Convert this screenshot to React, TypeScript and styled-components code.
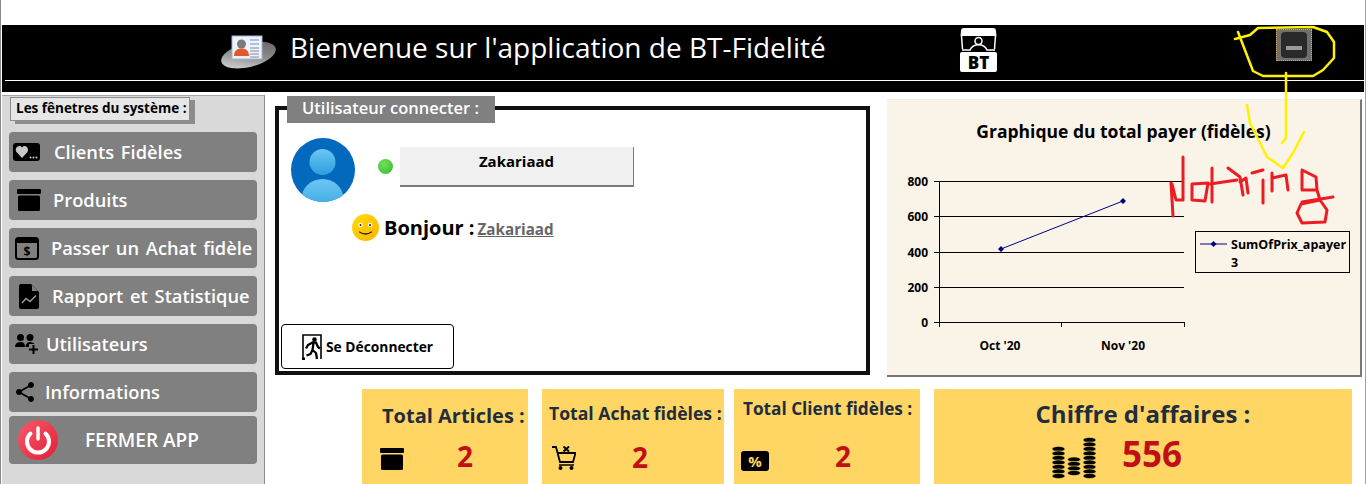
import styled, { createGlobalStyle } from "styled-components";
import { MdShare } from "react-icons/md";

const GlobalStyle = createGlobalStyle`
  html, body {
    margin: 0;
    padding: 0;
    background: #fff;
    overflow: hidden;
  }
  * {
    box-sizing: border-box;
  }
`;

const FONT = `"Open Sans", "Noto Sans", "Liberation Sans", sans-serif`;
const YELLOW = "#fff200";
const RED = "#ed1c24";

const ArchiveIcon = (props: { w: number; h: number }) => (
  <svg width={props.w} height={props.h} viewBox="0 0 24 22">
    <rect x="0" y="0" width="24" height="5" rx="1" fill="#000" />
    <rect x="1" y="6.500" width="22" height="15.500" rx="1.500" fill="#000" />
  </svg>
);

const HeartBubbleIcon = () => (
  <svg width="27" height="19" viewBox="0 0 27 19">
    <rect width="27" height="18" rx="3" fill="#000" />
    <path d="M9 15 L3.500 9 C1.500 6 4 3 6.500 3 C7.800 3 8.500 3.700 9 4.500 C9.500 3.700 10.500 3 11.500 3 C14 3 16 6 14.500 9 Z" fill="#c9c9c9" />
    <circle cx="17.500" cy="14.500" r="1" fill="#c9c9c9" />
    <circle cx="20.500" cy="14.500" r="1" fill="#c9c9c9" />
    <circle cx="23.500" cy="14.500" r="1" fill="#c9c9c9" />
  </svg>
);

const CalendarDollarIcon = () => (
  <svg width="24" height="23" viewBox="0 0 24 23">
    <rect x="1" y="1" width="22" height="21" rx="2.500" fill="none" stroke="#000" strokeWidth="2" />
    <rect x="1" y="1" width="22" height="5" fill="#000" />
    <text x="12" y="19" textAnchor="middle" fontFamily={FONT} fontSize="12" fontWeight="700" fill="#000">$</text>
  </svg>
);

const FileChartIcon = () => (
  <svg width="20" height="25" viewBox="0 0 20 25">
    <path d="M2 0 H12 L20 8 V23 a2 2 0 0 1 -2 2 H2 a2 2 0 0 1 -2 -2 V2 a2 2 0 0 1 2 -2 Z" fill="#000" />
    <path d="M13 1 V7 H19 Z" fill="#808080" />
    <path d="M3 19 L7 14.500 L11 17.500 L17 11.500" fill="none" stroke="#9a9a9a" strokeWidth="1.500" />
  </svg>
);

const UsersPlusIcon = () => (
  <svg width="24" height="20" viewBox="0 0 24 20">
    <circle cx="5.500" cy="3.500" r="3.500" fill="#000" />
    <circle cx="15" cy="3.500" r="3.500" fill="#000" />
    <path d="M0 13 C0 9 3 8 5.500 8 C8 8 10 9 10 13 Z" fill="#000" />
    <path d="M10.500 13 C11 9 13 8 15 8 C17 8 19 9 19.500 10 L14 10 V13 Z" fill="#000" />
    <path d="M14 15.500 H23 M18.500 11 V20" stroke="#000" strokeWidth="2" />
  </svg>
);

const PowerIcon = () => (
  <svg width="40" height="40" viewBox="0 0 40 40">
    <defs>
      <linearGradient id="powerFill" x1="0" y1="0" x2="1" y2="1">
        <stop offset="0" stopColor="#f75a6c" />
        <stop offset="1" stopColor="#e21f33" />
      </linearGradient>
    </defs>
    <circle cx="20" cy="20" r="20" fill="url(#powerFill)" />
    <path d="M12.500 13.500 A11 11 0 1 0 27.500 13.500" fill="none" stroke="#fff" strokeWidth="4" strokeLinecap="round" />
    <line x1="20" y1="8" x2="20" y2="19" stroke="#fff" strokeWidth="3.500" strokeLinecap="round" />
  </svg>
);

const CardLogo = () => (
  <svg width="56" height="36" viewBox="0 0 56 36">
    <defs>
      <linearGradient id="discFill" x1="0" y1="1" x2="1" y2="0">
        <stop offset="0" stopColor="#e8e8e8" />
        <stop offset="0.500" stopColor="#8d8d8d" />
        <stop offset="1" stopColor="#5c5c5c" />
      </linearGradient>
    </defs>
    <ellipse cx="27.500" cy="20" rx="28" ry="12" transform="rotate(-14 27.500 20)" fill="url(#discFill)" />
    <rect x="11" y="1" width="30" height="23" fill="#eef3fa" stroke="#9fb6d8" />
    <circle cx="20.500" cy="9" r="4.500" fill="#7a7a7a" />
    <path d="M13 21 C13 15 17 13.500 20.500 13.500 C24 13.500 28 15 28 21 Z" fill="#e2572b" />
    <path d="M29 5 H38 M29 9 H38" stroke="#6f8fcb" strokeWidth="1" />
    <path d="M29 13 H38 M29 16 H38 M29 19 H38 M29 22 H38" stroke="#7f8a9c" strokeWidth="1" />
  </svg>
);

const BtLogo = () => (
  <svg width="37" height="44" viewBox="0 0 37 44">
    <path d="M4 0 H33 Q36 0 36 3 L36.500 8 H0.500 L1 3 Q1 0 4 0 Z" fill="#fff" />
    <path d="M1.500 8 L2.500 21 M35.500 8 L34.500 21" stroke="#fff" strokeWidth="1.500" />
    <rect x="0" y="24" width="37" height="20" rx="2" fill="#fff" />
    <path d="M2 22 H10 C13 15 24 15 27 22 H35" fill="none" stroke="#fff" strokeWidth="1.500" />
    <circle cx="18.500" cy="13" r="3.500" fill="none" stroke="#fff" strokeWidth="1.500" />
    <text x="18.500" y="40.500" textAnchor="middle" fontFamily={FONT} fontSize="17" fontWeight="800" fill="#000">BT</text>
  </svg>
);

const AvatarIcon = () => (
  <svg width="64" height="64" viewBox="0 0 64 64">
    <defs>
      <linearGradient id="avatarPart" x1="0" y1="0" x2="0" y2="1">
        <stop offset="0" stopColor="#6cc6f2" />
        <stop offset="1" stopColor="#2a9fe0" />
      </linearGradient>
      <clipPath id="avatarClip">
        <circle cx="32" cy="32" r="32" />
      </clipPath>
    </defs>
    <circle cx="32" cy="32" r="32" fill="#0369bd" />
    <g clipPath="url(#avatarClip)">
      <circle cx="31.500" cy="24" r="13" fill="url(#avatarPart)" />
      <ellipse cx="31.500" cy="61" rx="21" ry="20" fill="url(#avatarPart)" />
    </g>
  </svg>
);

const SmileIcon = () => (
  <svg width="27" height="27" viewBox="0 0 27 27">
    <defs>
      <linearGradient id="smileFill" x1="0" y1="0" x2="1" y2="1">
        <stop offset="0" stopColor="#ffde00" />
        <stop offset="1" stopColor="#ffb300" />
      </linearGradient>
    </defs>
    <circle cx="13.500" cy="13.500" r="13.500" fill="url(#smileFill)" />
    <circle cx="8.500" cy="11" r="2.200" fill="#fff" />
    <circle cx="18" cy="11" r="2.200" fill="#fff" />
    <circle cx="8.500" cy="11" r="1" fill="#222" />
    <circle cx="18" cy="11" r="1" fill="#222" />
    <path d="M7.500 18 Q13.500 22 19.500 18" fill="none" stroke="#222" strokeWidth="1.300" strokeLinecap="round" />
  </svg>
);

const ExitIcon = () => (
  <svg width="20" height="26" viewBox="0 0 20 26">
    <path d="M1 24 V1 H19 V25" fill="none" stroke="#000" strokeWidth="1.600" />
    <rect x="0" y="23.500" width="3" height="2.500" fill="#000" />
    <circle cx="12.500" cy="5.500" r="2.300" fill="#000" />
    <path d="M10 8.500 L14 8.500 L16 13 L18 14.500 M10.500 8.500 L6 11 L4 14.500 M11.500 9 L10.500 16 L14 19 L15 25 M10.500 16 L8.500 20 L4.500 21.500" fill="none" stroke="#000" strokeWidth="2.300" strokeLinejoin="round" />
  </svg>
);

const CartIcon = () => (
  <svg width="24" height="24" viewBox="0 0 24 24">
    <path d="M0 1 H4 L8 16 H21 L23.500 7 H6" fill="none" stroke="#000" strokeWidth="1.800" />
    <path d="M7 19 H22" stroke="#000" strokeWidth="1.500" />
    <circle cx="8.500" cy="22" r="2" fill="#000" />
    <circle cx="19.500" cy="22" r="2" fill="#000" />
    <path d="M11.500 0.500 L17 5.500 M17 0.500 L11.500 5.500" stroke="#000" strokeWidth="2" />
  </svg>
);

const PercentIcon = () => (
  <svg width="28" height="20" viewBox="0 0 28 20">
    <rect width="28" height="20" rx="3" fill="#000" />
    <text x="14" y="16" textAnchor="middle" fontFamily={FONT} fontSize="15" fontWeight="700" fill="#ffd664">%</text>
  </svg>
);

const CoinStack = (props: { x: number; top: number }) => {
  const rows = [];
  for (let y = props.top; y < 40; y += 4.500) {
    rows.push(<ellipse key={y} cx={props.x} cy={y} rx="6.500" ry="2.600" fill="#000" stroke="#ffd664" strokeWidth="0.600" />);
  }
  return <>{rows}</>;
};

const CoinsIcon = () => (
  <svg width="44" height="42" viewBox="0 0 44 42">
    <CoinStack x={6.5} top={12} />
    <CoinStack x={22} top={22.5} />
    <CoinStack x={37.5} top={3} />
  </svg>
);

const MENU = [
  { label: "Clients Fidèles", icon: <HeartBubbleIcon />, iconLeft: 4, textLeft: 14 },
  { label: "Produits", icon: <ArchiveIcon w={24} h={22} />, iconLeft: 8, textLeft: 12 },
  { label: "Passer un Achat fidèle", icon: <CalendarDollarIcon />, iconLeft: 6, textLeft: 12 },
  { label: "Rapport et Statistique", icon: <FileChartIcon />, iconLeft: 10, textLeft: 13 },
  { label: "Utilisateurs", icon: <UsersPlusIcon />, iconLeft: 6, textLeft: 7 },
  { label: "Informations", icon: <MdShare size={24} color="#000" />, iconLeft: 4, textLeft: 8 },
];

const GRID_Y = [181.5, 216.5, 252.5, 287.5];
const AXIS_LABELS: [string, number][] = [
  ["800", 181.5],
  ["600", 216.5],
  ["400", 252.5],
  ["200", 287.5],
  ["0", 322.5],
];

export default function App() {
  return (
    <Frame>
      <GlobalStyle />
      <Header>
        <HeaderRow>
          <CardLogo />
          <HeaderTitle>Bienvenue sur l'application de BT-Fidelité</HeaderTitle>
          <BtSlot>
            <BtLogo />
          </BtSlot>
          <MinimizeButton>
            <MinimizeInner>
              <MinimizeDash />
            </MinimizeInner>
          </MinimizeButton>
        </HeaderRow>
        <HeaderLine />
      </Header>
      <Body>
        <Sidebar>
          <SideLabel>Les fênetres du système :</SideLabel>
          <Menu>
            {MENU.map((item) => (
              <MenuButton key={item.label} $iconLeft={item.iconLeft}>
                {item.icon}
                <MenuText $left={item.textLeft}>{item.label}</MenuText>
              </MenuButton>
            ))}
            <CloseButton>
              <PowerIcon />
              <CloseText>FERMER APP</CloseText>
            </CloseButton>
          </Menu>
        </Sidebar>
        <Main>
          <TopRow>
            <UserPanel>
              <PanelTab>Utilisateur connecter :</PanelTab>
              <UserRow>
                <AvatarIcon />
                <StatusDot />
                <NameButton>Zakariaad</NameButton>
              </UserRow>
              <Greeting>
                <SmileIcon />
                <Hello>Bonjour :</Hello>
                <HelloName>Zakariaad</HelloName>
              </Greeting>
              <LogoutButton>
                <ExitIcon />
                <LogoutText>Se Déconnecter</LogoutText>
              </LogoutButton>
            </UserPanel>
            <ChartPanel>
              <ChartTitle>Graphique du total payer (fidèles)</ChartTitle>
              <svg width="473" height="190" viewBox="887 170 473 190">
                {GRID_Y.map((y) => (
                  <line key={y} x1="934" x2="1184" y1={y} y2={y} stroke="#000" />
                ))}
                <line x1="939.500" x2="939.500" y1="181" y2="327" stroke="#000" />
                <line x1="934" x2="1184" y1="322.500" y2="322.500" stroke="#000" />
                {[939.5, 1061.5, 1184.5].map((x) => (
                  <line key={x} x1={x} x2={x} y1="322" y2="327" stroke="#000" />
                ))}
                <AxisText>
                  {AXIS_LABELS.map(([t, y]) => (
                    <text key={t} x="928" y={y + 4.5} textAnchor="end">{t}</text>
                  ))}
                  <text x="1000" y="350" textAnchor="middle">Oct '20</text>
                  <text x="1123" y="350" textAnchor="middle">Nov '20</text>
                </AxisText>
                <line x1="1001" y1="249" x2="1123" y2="201" stroke="#000080" />
                <path d="M1001 246 L1004 249 L1001 252 L998 249 Z M1123 198 L1126 201 L1123 204 L1120 201 Z" fill="#000080" />
                <rect x="1195.500" y="231.500" width="154" height="41" fill="none" stroke="#000" />
                <line x1="1200" y1="244" x2="1227" y2="244" stroke="#000080" />
                <path d="M1213.500 241 L1216.500 244 L1213.500 247 L1210.500 244 Z" fill="#000080" />
                <LegendText>
                  <text x="1231" y="249">SumOfPrix_apayer</text>
                  <text x="1231" y="267">3</text>
                </LegendText>
              </svg>
            </ChartPanel>
          </TopRow>
          <StatsRow>
            <StatCard $width={166} $pad={20} $after={14}>
              <StatTitle $size={20} $top={13}>Total Articles :</StatTitle>
              <StatRow $top={13} $iconLeft={-2}>
                <ArchiveIcon w={24} h={22} />
                <StatValue $size={28} $left={53} $raise={6}>2</StatValue>
              </StatRow>
            </StatCard>
            <StatCard $width={182} $pad={7} $after={10}>
              <StatTitle $size={17.6} $top={12}>Total Achat fidèles :</StatTitle>
              <StatRow $top={18} $iconLeft={3}>
                <CartIcon />
                <StatValue $size={28} $left={56} $raise={2}>2</StatValue>
              </StatRow>
            </StatCard>
            <StatCard $width={186} $pad={9} $after={14}>
              <StatTitle $size={17.2} $top={8}>Total Client fidèles :</StatTitle>
              <StatRow $top={22} $iconLeft={-2}>
                <PercentIcon />
                <StatValue $size={28} $left={66} $raise={10}>2</StatValue>
              </StatRow>
            </StatCard>
            <TurnoverCard>
              <TurnoverTitle>Chiffre d'affaires :</TurnoverTitle>
              <TurnoverRow>
                <CoinsIcon />
                <StatValue $size={35} $left={26} $raise={8}>556</StatValue>
              </TurnoverRow>
            </TurnoverCard>
          </StatsRow>
        </Main>
      </Body>
      <Scribbles width="1366" height="484" viewBox="0 0 1366 484">
        <g fill="none" stroke={YELLOW} strokeWidth="2.500" strokeLinejoin="round" strokeLinecap="round">
          <path d="M1235 39 L1250 35 L1258 28 L1313 27 L1327 32 L1334 42 L1334 58 L1323 70 L1313 76 L1263 76 L1253 71 L1238 32" />
          <path d="M1286 73 L1286 138 L1282 143" />
          <path d="M1247 105 L1250 123 L1267 157 L1283 168 L1293 153 L1304 132" />
        </g>
        <g fill="none" stroke={RED} strokeWidth="3" strokeLinejoin="round" strokeLinecap="round">
          <path d="M1171 183 L1173 216 M1172 184 L1176 200 L1183 200 L1183 157" />
          <path d="M1192 184 L1192 200 L1205 201 L1208 183 L1192 184" />
          <path d="M1212 168 L1212 202 M1210 184 L1237 180" />
          <path d="M1228 168 L1240 177 L1243 195 M1240 182 L1246 178 L1248 193" />
          <path d="M1252 173 L1263 170 M1263 180 L1263 203" />
          <path d="M1272 173 L1272 191 M1272 178 L1286 175 L1288 190" />
          <path d="M1302 170 L1302 190 L1317 190 L1316 177 L1302 170 M1317 190 L1320 200 L1301 204 L1297 213 L1302 223 L1325 222 L1327 210 L1320 200 M1302 202 L1333 197" />
        </g>
      </Scribbles>
    </Frame>
  );
}

const Frame = styled.div`
  position: relative;
  width: 1366px;
  height: 484px;
  overflow: hidden;
  background: #fff;
  padding: 25px 1px 0 1px;
  border-left: 1px solid #8a8a8a;
  border-right: 1px solid #a0a0a0;
  font-family: ${FONT};
`;
const Scribbles = styled.svg`
  position: absolute;
  top: 0;
  left: -1px;
  pointer-events: none;
`;
const Header = styled.header`
  height: 67px;
  background: #000;
  display: flex;
  flex-direction: column;
`;
const HeaderRow = styled.div`
  height: 55px;
  display: flex;
  align-items: center;
  padding-left: 219px;
`;
const HeaderTitle = styled.h1`
  width: 535px;
  margin: 0 0 11px 13px;
  color: #fff;
  font-size: 28px;
  font-weight: 400;
  white-space: nowrap;
`;
const BtSlot = styled.div`
  margin: -6px 0 0 135px;
  height: 44px;
`;
const MinimizeButton = styled.div`
  margin: -15px 0 0 279px;
  width: 36px;
  height: 32px;
  background: #6f6f6f;
  border: 1px dotted #e0a020;
  display: flex;
  align-items: center;
  justify-content: center;
`;
const MinimizeInner = styled.div`
  width: 26px;
  height: 26px;
  border-radius: 4px;
  background: #2a2a2a;
  display: flex;
  align-items: center;
  justify-content: center;
`;
const MinimizeDash = styled.div`
  width: 16px;
  height: 4px;
  margin-top: 6px;
  background: #9a9a9a;
`;
const HeaderLine = styled.div`
  height: 1px;
  margin-left: 3px;
  background: #fff;
`;
const Body = styled.div`
  margin-top: 3px;
  display: grid;
  grid-template-columns: 263px 1fr;
`;
const Sidebar = styled.aside`
  height: 389px;
  background: #d9d9d9;
  border-top: 1px solid #a6a6a6;
  border-right: 1px solid #8c8c8c;
  padding: 1px 0 0 7px;
`;
const SideLabel = styled.div`
  width: 180px;
  height: 24px;
  margin-left: 1px;
  border: 1px solid #8c8c8c;
  box-shadow: 5px 3px 0 #8c8c8c;
  background: #e6e6e6;
  color: #000;
  font-size: 13.500px;
  font-weight: 700;
  line-height: 21px;
  padding-left: 5px;
  white-space: nowrap;
`;
const Menu = styled.nav`
  margin-top: 11px;
  display: flex;
  flex-direction: column;
  gap: 8px;
`;
const MenuButton = styled.div<{ $iconLeft: number }>`
  width: 248px;
  height: 40px;
  padding-left: ${(props) => props.$iconLeft}px;
  border-radius: 4px;
  background: #808080;
  display: flex;
  align-items: center;
`;
const MenuText = styled.span<{ $left: number }>`
  margin-left: ${(props) => props.$left}px;
  padding-bottom: 2px;
  color: #fff;
  font-size: 18.300px;
  font-weight: 600;
  word-spacing: 2px;
  white-space: nowrap;
`;
const CloseButton = styled.div`
  width: 248px;
  height: 48px;
  margin-top: -4px;
  padding-left: 9px;
  border-radius: 4px;
  background: #808080;
  display: flex;
  align-items: center;
`;
const CloseText = styled.span`
  margin-left: 27px;
  color: #fff;
  font-size: 19px;
  font-weight: 600;
`;
const Main = styled.main`
  min-width: 0;
`;
const TopRow = styled.div`
  height: 294px;
  padding-left: 10px;
  display: flex;
  align-items: flex-start;
`;
const UserPanel = styled.section`
  position: relative;
  width: 595px;
  height: 269px;
  margin-top: 11px;
  border: 4px solid #111;
  padding: 28px 0 2px 2px;
  display: flex;
  flex-direction: column;
`;
const PanelTab = styled.div`
  position: absolute;
  top: -14px;
  left: 8px;
  width: 208px;
  height: 27px;
  background: #808080;
  color: #fff;
  font-size: 16.500px;
  font-weight: 600;
  line-height: 24px;
  padding-left: 15px;
  white-space: nowrap;
`;
const UserRow = styled.div`
  height: 64px;
  margin-left: 10px;
  display: flex;
  align-items: flex-start;
`;
const StatusDot = styled.div`
  width: 15px;
  height: 15px;
  margin: 21px 0 0 23px;
  border-radius: 50%;
  background: radial-gradient(circle at 40% 35%, #6fe05a, #35b82e);
`;
const NameButton = styled.div`
  width: 234px;
  height: 40px;
  margin: 9px 0 0 7px;
  background: #f0f0f0;
  border-right: 1px solid #7a7a7a;
  border-bottom: 2px solid #7a7a7a;
  color: #000;
  font-size: 15px;
  font-weight: 700;
  line-height: 29px;
  text-align: center;
`;
const Greeting = styled.div`
  margin: 12px 0 0 71px;
  display: flex;
  align-items: center;
`;
const Hello = styled.span`
  margin-left: 5px;
  color: #000;
  font-size: 20px;
  font-weight: 700;
`;
const HelloName = styled.span`
  margin-left: 3px;
  padding-top: 2px;
  color: #666;
  font-size: 15.200px;
  font-weight: 700;
  text-decoration: underline;
`;
const LogoutButton = styled.div`
  width: 173px;
  height: 45px;
  margin-top: auto;
  padding-left: 20px;
  border: 1px solid #000;
  border-radius: 4px;
  background: #fff;
  display: flex;
  align-items: center;
`;
const LogoutText = styled.span`
  margin-left: 4px;
  color: #000;
  font-size: 13.800px;
  font-weight: 700;
  white-space: nowrap;
`;
const ChartPanel = styled.section`
  width: 475px;
  height: 278px;
  margin: 4px 0 0 17px;
  background: #f9f3e8;
  border-top: 1px solid #eee;
  border-right: 2px solid #777;
  border-bottom: 2px solid #777;
  overflow: hidden;
`;
const ChartTitle = styled.h2`
  height: 70px;
  margin: 0;
  padding: 19px 0 0 0;
  color: #000;
  font-size: 17.500px;
  font-weight: 700;
  text-align: center;
  white-space: nowrap;
`;
const AxisText = styled.g`
  font-family: ${FONT};
  font-size: 12px;
  font-weight: 700;
  fill: #000;
`;
const LegendText = styled(AxisText)`
  font-size: 12.500px;
`;
const StatsRow = styled.div`
  padding-left: 97px;
  display: flex;
  align-items: flex-start;
`;
const StatCard = styled.div<{ $width: number; $pad: number; $after: number }>`
  width: ${(props) => props.$width}px;
  height: 95px;
  margin-right: ${(props) => props.$after}px;
  padding-left: ${(props) => props.$pad}px;
  background: #ffd664;
`;
const StatTitle = styled.div<{ $size: number; $top: number }>`
  padding-top: ${(props) => props.$top}px;
  color: #1f2d3d;
  font-size: ${(props) => props.$size}px;
  font-weight: 700;
  white-space: nowrap;
`;
const StatRow = styled.div<{ $top: number; $iconLeft: number }>`
  margin: ${(props) => props.$top}px 0 0 ${(props) => props.$iconLeft}px;
  display: flex;
  align-items: center;
`;
const StatValue = styled.span<{ $size: number; $left: number; $raise: number }>`
  margin-left: ${(props) => props.$left}px;
  margin-bottom: ${(props) => props.$raise}px;
  color: #c00f17;
  font-size: ${(props) => props.$size}px;
  font-weight: 700;
  line-height: 1;
`;
const TurnoverCard = styled.div`
  width: 418px;
  height: 95px;
  background: #ffd664;
  padding-top: 8px;
`;
const TurnoverTitle = styled.div`
  color: #1f2d3d;
  font-size: 24px;
  font-weight: 700;
  text-align: center;
  white-space: nowrap;
`;
const TurnoverRow = styled.div`
  margin: 6px 0 0 118px;
  display: flex;
  align-items: center;
`;
